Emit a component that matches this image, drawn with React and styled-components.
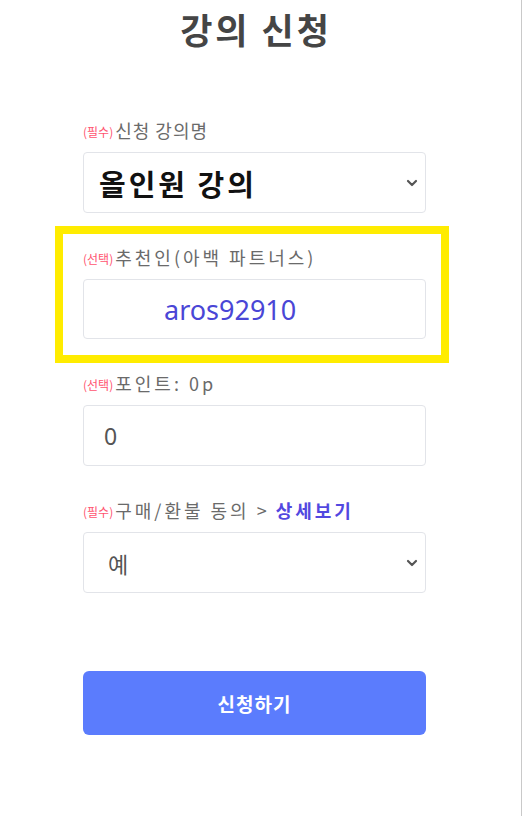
import React from "react"
import styled, { createGlobalStyle } from "styled-components"

const GlobalStyle = createGlobalStyle`
  html, body {
    margin: 0;
    padding: 0;
    background: #ffffff;
  }
  body {
    font-family: "Noto Sans CJK KR", "Noto Sans", sans-serif;
  }
`

const Page = styled.div`
  box-sizing: border-box;
  width: 522px;
  min-height: 816px;
  border-right: 1px solid #c9c9c9;
  padding-top: 8px;
`

const Form = styled.div`
  width: 343px;
  margin-left: 83px;
  display: flex;
  flex-direction: column;
`

const Title = styled.h1`
  margin: 0;
  text-align: center;
  font-size: 35px;
  line-height: 41px;
  letter-spacing: 3px;
  text-indent: 3px;
  font-weight: 700;
  color: #454545;
`

const Field = styled.div`
  display: flex;
  flex-direction: column;
  gap: 10px;
  margin-top: ${(p) => p.$top || 0}px;
`

const Highlight = styled.div`
  box-sizing: border-box;
  margin: 13px -23px 0 -28px;
  border: 8px solid #ffec00;
  padding: 11px 15px 16px 20px;
`

const Label = styled.label`
  display: flex;
  align-items: center;
  height: 24px;
  font-size: 18px;
  letter-spacing: ${(p) => p.$spacing || 0}px;
  color: #6a6a6a;
`

const Badge = styled.span`
  font-size: 12px;
  letter-spacing: 0;
  color: #ff5470;
  margin-right: 2px;
  position: relative;
  top: 1px;
`

const Link = styled.a`
  color: #5248e0;
  font-weight: 700;
  text-decoration: none;
  margin-left: 6px;
`

const SelectWrap = styled.div`
  position: relative;
`

const Select = styled.select`
  box-sizing: border-box;
  width: 100%;
  height: ${(p) => p.$h || 61}px;
  appearance: none;
  border: 1px solid #e2e4e9;
  border-radius: 4px;
  background: #fff;
  padding-left: ${(p) => p.$pad || 16}px;
  font-family: inherit;
  font-size: ${(p) => p.$size || 22}px;
  font-weight: ${(p) => (p.$bold ? 700 : 400)};
  letter-spacing: ${(p) => p.$spacing || 0}px;
  color: ${(p) => p.$color || "#555"};
  outline: none;
`

const Chevron = styled.svg`
  position: absolute;
  right: 8px;
  top: 50%;
  margin-top: -5px;
  width: 12px;
  height: 10px;
  pointer-events: none;
`

const Input = styled.input`
  box-sizing: border-box;
  width: 100%;
  height: ${(p) => p.$h || 61}px;
  border: 1px solid #e2e4e9;
  border-radius: 4px;
  background: #fff;
  padding-left: ${(p) => p.$pad || 20}px;
  font-family: "Noto Sans", "Noto Sans CJK KR", sans-serif;
  font-size: ${(p) => p.$size || 22}px;
  color: ${(p) => p.$color || "#555"};
  outline: none;
`

const Submit = styled.button`
  margin-top: 78px;
  height: 64px;
  border: none;
  border-radius: 6px;
  background: #5b7cfd;
  color: #fff;
  font-family: inherit;
  font-size: 19px;
  letter-spacing: 1px;
  font-weight: 700;
  cursor: pointer;
`

const Arrow = () => (
  <Chevron viewBox="0 0 12 10">
    <path d="M2 3 L6 7 L10 3" fill="none" stroke="#555" strokeWidth="2.2" strokeLinecap="round" strokeLinejoin="round" />
  </Chevron>
)

const App = () => (
  <>
    <GlobalStyle />
    <Page>
      <Form>
        <Title>강의 신청</Title>

        <Field $top={69}>
          <Label $spacing={1}>
            <Badge>(필수)</Badge>신청 강의명
          </Label>
          <SelectWrap>
            <Select $size={29} $bold $spacing={3} $color="#111" $pad={15} defaultValue="all">
              <option value="all">올인원 강의</option>
            </Select>
            <Arrow />
          </SelectWrap>
        </Field>

        <Highlight>
          <Field>
            <Label $spacing={3}>
              <Badge>(선택)</Badge>추천인(아백 파트너스)
            </Label>
            <Input $h={60} $pad={80} $size={27} $color="#4a46d6" value="aros92910" readOnly />
          </Field>
        </Highlight>

        <Field $top={8}>
          <Label $spacing={3}>
            <Badge>(선택)</Badge>포인트: 0p
          </Label>
          <Input $size={23} value="0" readOnly />
        </Field>

        <Field $top={32}>
          <Label $spacing={3}>
            <Badge>(필수)</Badge>구매/환불 동의 &gt;
            <Link href="#">상세보기</Link>
          </Label>
          <SelectWrap>
            <Select $pad={24} $size={22} defaultValue="yes">
              <option value="yes">예</option>
              <option value="no">아니오</option>
            </Select>
            <Arrow />
          </SelectWrap>
        </Field>

        <Submit type="button">신청하기</Submit>
      </Form>
    </Page>
  </>
)

export default App
